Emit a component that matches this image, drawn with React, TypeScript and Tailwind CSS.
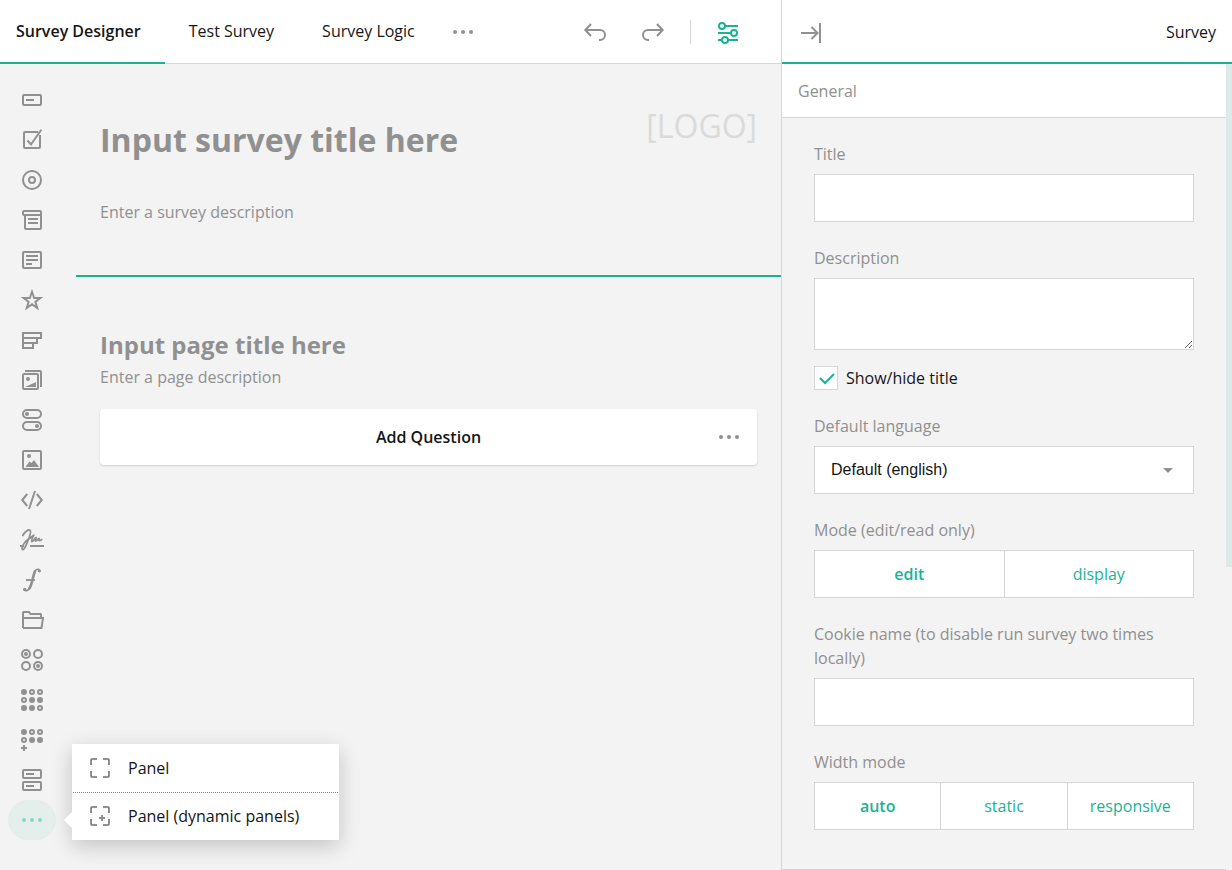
import { useState, type ReactNode } from "react";

function Icon({ children, className = "" }: { children: ReactNode; className?: string }) {
  return (
    <svg
      viewBox="0 0 24 24"
      className={`size-6 shrink-0 ${className}`}
      fill="none"
      stroke="currentColor"
      strokeWidth="2"
      aria-hidden="true"
    >
      {children}
    </svg>
  );
}

function Dot({ x, y, r = 2 }: { x: number; y: number; r?: number }) {
  return <circle cx={x} cy={y} r={r} fill="currentColor" stroke="none" />;
}

function Dots({ className = "" }: { className?: string }) {
  return (
    <Icon className={className}>
      <Dot x={4} y={12} />
      <Dot x={12} y={12} />
      <Dot x={20} y={12} />
    </Icon>
  );
}

/* Grid of small discs; "1" is filled, "0" is a ring. */
function DiscGrid({ rows }: { rows: string[] }) {
  return (
    <>
      {rows.flatMap((row, r) =>
        row.split("").map((cell, c) =>
          cell === "1" ? (
            <Dot key={`${r}${c}`} x={4 + c * 8} y={4 + r * 8} r={3} />
          ) : (
            <circle key={`${r}${c}`} cx={4 + c * 8} cy={4 + r * 8} r="2" />
          ),
        ),
      )}
    </>
  );
}

const tools: { name: string; icon: ReactNode }[] = [
  {
    name: "Single-Line Input",
    icon: (
      <>
        <rect x="3" y="7" width="18" height="10" rx="1" />
        <path d="M6 12h8" />
      </>
    ),
  },
  {
    name: "Checkboxes",
    icon: <path d="M18 4H5a1 1 0 0 0-1 1v14a1 1 0 0 0 1 1h14a1 1 0 0 0 1-1V7M7.5 12.5 11 16.5 21.3 1.8" />,
  },
  {
    name: "Radio Button Group",
    icon: (
      <>
        <circle cx="12" cy="12" r="9" />
        <circle cx="12" cy="12" r="3" />
      </>
    ),
  },
  {
    name: "Dropdown",
    icon: (
      <>
        <rect x="3" y="3" width="18" height="4" rx="1" />
        <path d="M5 7v13a1 1 0 0 0 1 1h14a1 1 0 0 0 1-1V6M8 11h10M8 15h10" />
      </>
    ),
  },
  {
    name: "Long Text",
    icon: (
      <>
        <rect x="3" y="4" width="18" height="16" rx="1" />
        <path d="M6 8h12M6 12h12M6 16h6" />
      </>
    ),
  },
  {
    name: "Rating Scale",
    icon: (
      <path
        d="M12 .8 14.8 9H23.300L16.500 14.200 19.100 22.400 12 17.500 4.900 22.400 7.500 14.200.7 9H9.200zM12 6.600 10.600 11H6.500L9.800 13.500 8.500 17.500 12 15.100 15.500 17.500 14.200 13.500 17.500 11H13.400z"
        fill="currentColor"
        fillRule="evenodd"
        stroke="none"
      />
    ),
  },
  {
    name: "Ranking",
    icon: <path d="M3 5h18v5H3zM3 10h14v5H3zM3 15h10v5H3z" />,
  },
  {
    name: "Image Picker",
    icon: (
      <>
        <rect x="3" y="6" width="15" height="15" rx="1" />
        <path d="M5 3h15a1 1 0 0 1 1 1v15" />
        <Dot x={8} y={11} />
        <path d="M5 19 16 14v5z" fill="currentColor" stroke="none" />
      </>
    ),
  },
  {
    name: "Yes/No (Boolean)",
    icon: (
      <>
        <rect x="3" y="2" width="18" height="8" rx="4" />
        <rect x="3" y="14" width="18" height="8" rx="4" />
        <Dot x={7} y={6} />
        <Dot x={17} y={18} />
      </>
    ),
  },
  {
    name: "Image",
    icon: (
      <>
        <rect x="3" y="3" width="18" height="18" rx="1" />
        <Dot x={9} y={8} />
        <path d="M5.5 19 9.5 13.6 11.5 15 14 12 19 19z" fill="currentColor" stroke="none" />
      </>
    ),
  },
  {
    name: "HTML",
    icon: <path d="M7.2 6 2.2 12 7.2 18M16.8 6 21.8 12 16.8 18M15 3 9 21" />,
  },
  {
    name: "Signature",
    icon: (
      <>
        <path d="M0 18h4M10 18h14" />
        <path
          d="M2.800 7.500C4.500 4.200 8 1.200 10 2.200c1.800 1-.2 6-2 10.300C6.300 16.800 4.800 21.300 3 21.600c-1.700.2-.8-4 2-7.400C7.500 11.200 11 10 13.800 7.200c-1.200 2.300-2.600 5.600-2 6.300.8.6 2.800-3 4.400-3.900-.6 1.500-1.200 3.100-.6 3.400.8.300 2.200-1.900 3.600-2.500-.4 1-.5 1.900.2 2.100.7.1 1.400-.4 2.200-1"
          strokeWidth="1.8"
          strokeLinecap="round"
          strokeLinejoin="round"
        />
      </>
    ),
  },
  {
    name: "Expression",
    icon: (
      <>
        <path d="M19.500 2.200C18.500.7 16.300.8 15 3.200" strokeWidth="1.600" />
        <path d="M15.300 2.600C13.500 6 12.600 12.500 11 17c-.6 1.800-1.200 3.200-2.200 4.200" strokeWidth="2.600" />
        <path d="M9.600 20.300c-1.400 2-3.400 2.800-5 1.900" strokeWidth="1.600" />
        <path d="M6 12h9" strokeWidth="1.800" />
        <Dot x={19.4} y={2.8} r={1.6} />
        <Dot x={4.6} y={21.4} r={1.6} />
      </>
    ),
  },
  {
    name: "File Upload",
    icon: <path d="M3 20V4.500L3.500 4H9l1.500 2H20.500l.5.500V10M3 10h20l-1.500 10H3" />,
  },
  {
    name: "Single-Select Matrix",
    icon: (
      <>
        <circle cx="6" cy="6" r="4" />
        <circle cx="18" cy="6" r="4" />
        <circle cx="6" cy="18" r="4" />
        <circle cx="18" cy="18" r="4" />
        <Dot x={6} y={6} />
        <Dot x={18} y={18} />
      </>
    ),
  },
  { name: "Multi-Select Matrix", icon: <DiscGrid rows={["100", "011", "110"]} /> },
  {
    name: "Dynamic Matrix",
    icon: (
      <>
        <DiscGrid rows={["100", "011"]} />
        <path d="M1 20h6M4 17v6" />
      </>
    ),
  },
  {
    name: "Multiple Textboxes",
    icon: (
      <>
        <rect x="3" y="2" width="18" height="8" rx="1" />
        <rect x="3" y="14" width="18" height="8" rx="1" />
        <path d="M6 6h8M6 18h8" />
      </>
    ),
  },
];

const brackets =
  "M3 9V4a1 1 0 0 1 1-1h5M15 3h5a1 1 0 0 1 1 1v5M21 15v5a1 1 0 0 1-1 1h-5M9 21H4a1 1 0 0 1-1-1v-5";

function Toolbox() {
  return (
    <nav aria-label="Toolbox" className="flex w-[76px] shrink-0 flex-col px-2 pt-4 text-[#909090]">
      {tools.map((tool) => (
        <button
          key={tool.name}
          type="button"
          aria-label={tool.name}
          className="flex h-10 w-12 items-center justify-center"
        >
          <Icon>{tool.icon}</Icon>
        </button>
      ))}
      <div className="relative w-12">
        <button
          type="button"
          aria-label="More question types"
          aria-expanded="true"
          className="flex h-10 w-12 items-center justify-center rounded-[20px] bg-[#e4eeeb] text-[#8ad6c6]"
        >
          <Dots />
        </button>
        <div className="absolute bottom-0 left-16 z-10 w-[267px] bg-white px-px shadow-[0_6px_20px_rgba(0,0,0,0.2)]">
          <svg viewBox="0 0 8 16" className="absolute right-full bottom-3 h-4 w-2" aria-hidden="true">
            <path d="M8 0 0 8l8 8z" fill="#fff" />
          </svg>
          <button
            type="button"
            className="flex h-12 w-full items-center gap-4 px-[15px] text-[#161616]"
          >
            <Icon className="text-[#909090]">
              <path d={brackets} />
            </Icon>
            Panel
          </button>
          <div className="border-t border-dotted border-[#19b394]">
            <button
              type="button"
              className="-mt-px flex h-12 w-full items-center gap-4 px-[15px] text-[#161616]"
            >
              <Icon className="text-[#909090]">
                <path d={brackets} />
                <path d="M11 14h6M14 11v6" />
              </Icon>
              Panel (dynamic panels)
            </button>
          </div>
        </div>
      </div>
    </nav>
  );
}

function Header() {
  return (
    <header className="flex h-16 items-stretch border-b border-[#d6d6d6] bg-white text-[#161616]">
      <button
        type="button"
        className="-mb-px border-b-2 border-[#19b394] pr-6 pl-4 font-semibold whitespace-nowrap"
      >
        Survey Designer
      </button>
      <button type="button" className="-mb-px border-b-2 border-transparent px-6 whitespace-nowrap">
        Test Survey
      </button>
      <button type="button" className="-mb-px border-b-2 border-transparent px-6 whitespace-nowrap">
        Survey Logic
      </button>
      <button type="button" aria-label="More tabs" className="-mb-px flex w-12 items-center justify-center text-[#909090]">
        <Dots />
      </button>
      <div className="-mb-px ml-auto flex items-center gap-2.5 pr-[29px] text-[#909090]">
        <button type="button" aria-label="Undo" className="flex h-12 w-12 items-center justify-center">
          <Icon>
            <path d="M8 4 2.300 10 8 16M2.300 10H17a5 5 0 0 1 0 10H16" />
          </Icon>
        </button>
        <button type="button" aria-label="Redo" className="flex h-12 w-12 items-center justify-center">
          <Icon>
            <path d="M16 4 21.700 10 16 16M21.700 10H7a5 5 0 0 0 0 10H8" />
          </Icon>
        </button>
        <div className="mx-[3px] h-6 w-px bg-[#d6d6d6]" />
        <button
          type="button"
          aria-label="Settings"
          className="flex h-12 w-12 items-center justify-center text-[#19b394]"
        >
          <Icon>
            <circle cx="6" cy="6" r="3" />
            <circle cx="18" cy="13" r="3" />
            <circle cx="9" cy="20" r="3" />
            <path d="M9 6h13M2 13h13M2 20h4M12 20h10" />
          </Icon>
        </button>
      </div>
    </header>
  );
}

function Canvas() {
  return (
    <main className="min-w-0 flex-1 text-[#909090]">
      <section className="flex items-start justify-between border-b-2 border-[#19b394] px-6 pt-[42px] pb-[51px]">
        <div className="mt-[14px]">
          <h1 className="text-[32px] leading-10 font-bold">Input survey title here</h1>
          <p className="mt-10">Enter a survey description</p>
        </div>
        <div className="text-[32px] leading-10 text-[#dadada]">[LOGO]</div>
      </section>
      <section className="px-6 pt-[52px]">
        <h2 className="text-2xl leading-8 font-bold">Input page title here</h2>
        <p className="mt-1">Enter a page description</p>
        <div className="mt-5 grid h-14 grid-cols-[40px_1fr_40px] items-center rounded bg-white shadow-[0_1px_2px_rgba(0,0,0,0.15)]">
          <button type="button" className="col-start-2 h-full font-semibold text-[#161616]">
            Add Question
          </button>
          <button type="button" aria-label="Choose question type" className="flex h-full items-center">
            <Dots />
          </button>
        </div>
      </section>
    </main>
  );
}

function Segments({ label, options }: { label: string; options: string[] }) {
  const [value, setValue] = useState(options[0]);
  return (
    <div role="group" aria-label={label} className="mt-6">
      <div>{label}</div>
      <div className="mt-2 flex h-12 border border-[#d6d6d6] bg-white text-[#19b394]">
        {options.map((option) => (
          <button
            key={option}
            type="button"
            aria-pressed={option === value}
            onClick={() => setValue(option)}
            className={`flex-1 basis-0 border-l border-[#d6d6d6] first:border-l-0 ${
              option === value ? "font-semibold" : ""
            }`}
          >
            {option}
          </button>
        ))}
      </div>
    </div>
  );
}

const field = "mt-2 block w-full rounded-none border border-[#d6d6d6] bg-white px-4 text-[#161616] outline-none";

function PropertyPanel() {
  return (
    <aside className="flex w-[451px] shrink-0 flex-col border-l border-[#d6d6d6] text-[#909090]">
      <div className="flex h-16 items-center justify-between border-b-2 border-[#19b394] bg-white pr-4 pl-[17px]">
        <button type="button" aria-label="Collapse panel" className="mt-1">
          <Icon>
            <path d="M2 12h16M12.500 6 18.500 12 12.500 18M21 2v20" />
          </Icon>
        </button>
        <span className="mt-0.5 text-[#161616]">Survey</span>
      </div>
      <div className="flex flex-1">
        <div className="flex min-w-0 flex-1 flex-col border-b border-[#d6d6d6]">
          <button
            type="button"
            aria-expanded="true"
            className="h-[54px] border-b border-[#d6d6d6] bg-white px-4 text-left"
          >
            General
          </button>
          <form className="px-8 pt-6 pb-8">
            <label htmlFor="title" className="block">
              Title
            </label>
            <input id="title" type="text" className={`${field} h-12`} />
            <label htmlFor="description" className="mt-6 block">
              Description
            </label>
            <textarea id="description" className={`${field} h-[72px] resize`} />
            <div className="mt-4 flex items-center gap-2">
              <div className="relative size-6">
                <input
                  id="show-title"
                  type="checkbox"
                  defaultChecked
                  className="peer block size-6 appearance-none border border-[#d6d6d6] bg-white"
                />
                <Icon className="pointer-events-none absolute inset-0 hidden text-[#19b394] peer-checked:block">
                  <path d="M6.500 12.500 11 17 19.500 8.500" strokeLinecap="round" />
                </Icon>
              </div>
              <label htmlFor="show-title" className="text-[#161616]">
                Show/hide title
              </label>
            </div>
            <label htmlFor="language" className="mt-6 block">
              Default language
            </label>
            <div className="relative">
              <select
                id="language"
                className={`${field} h-12 appearance-none font-["Liberation_Sans",Arial,sans-serif]`}
              >
                <option>Default (english)</option>
              </select>
              <svg
                viewBox="0 0 10 5"
                className="pointer-events-none absolute top-[22px] right-[21px] h-[5px] w-2.5"
                aria-hidden="true"
              >
                <path d="M0 0h10L5 5z" fill="#909090" />
              </svg>
            </div>
            <Segments label="Mode (edit/read only)" options={["edit", "display"]} />
            <label htmlFor="cookie" className="mt-6 block">
              Cookie name (to disable run survey two times locally)
            </label>
            <input id="cookie" type="text" className={`${field} h-12`} />
            <Segments label="Width mode" options={["auto", "static", "responsive"]} />
          </form>
        </div>
        <div className="w-1.5 shrink-0">
          <div className="h-[503px] bg-[#dcebe7]" />
        </div>
      </div>
    </aside>
  );
}

export default function App() {
  return (
    <div className='flex min-h-screen bg-[#f3f3f3] font-["Open_Sans",sans-serif] text-base leading-6'>
      <div className="flex min-w-0 flex-1 flex-col">
        <Header />
        <div className="flex flex-1">
          <Toolbox />
          <Canvas />
        </div>
      </div>
      <PropertyPanel />
    </div>
  );
}
